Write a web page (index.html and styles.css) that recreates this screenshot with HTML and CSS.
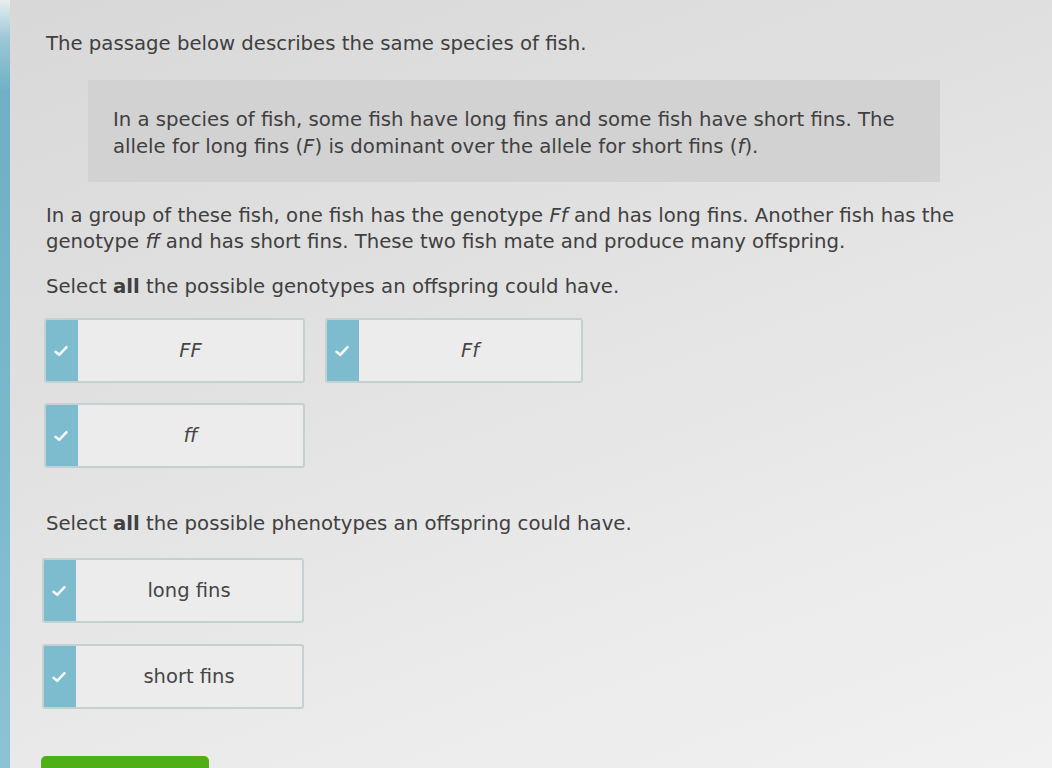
FILE: index.html
```html
<!DOCTYPE html>
<html lang="en">
<head>
<meta charset="utf-8">
<title>Fish fins – genotypes</title>
<link rel="stylesheet" href="styles.css">
</head>
<body>
<div class="screen">
  <div class="edge"></div>
  <main class="question">
    <p class="lead">The passage below describes the same species of fish.</p>

    <div class="passage">
      In a species of fish, some fish have long fins and some fish have short fins. The<br>
      allele for long fins (<i>F</i>) is dominant over the allele for short fins (<i>f</i>).
    </div>

    <p class="body-text">
      In a group of these fish, one fish has the genotype <i>Ff</i> and has long fins. Another fish has the<br>
      genotype <i>ff</i> and has short fins. These two fish mate and produce many offspring.
    </p>

    <p class="prompt">Select <b>all</b> the possible genotypes an offspring could have.</p>

    <div class="choices choices-geno">
      <div class="choice">
        <span class="tick"><svg viewBox="0 0 16 16" width="16" height="16"><path d="M2.5 8.8 L6.2 11.8 L13.5 4.2" fill="none" stroke="#f4f8f9" stroke-width="2.6" stroke-linecap="round" stroke-linejoin="round"/></svg></span>
        <span class="label"><i>FF</i></span>
      </div>
      <div class="choice">
        <span class="tick"><svg viewBox="0 0 16 16" width="16" height="16"><path d="M2.5 8.8 L6.2 11.8 L13.5 4.2" fill="none" stroke="#f4f8f9" stroke-width="2.6" stroke-linecap="round" stroke-linejoin="round"/></svg></span>
        <span class="label"><i>Ff</i></span>
      </div>
      <div class="choice">
        <span class="tick"><svg viewBox="0 0 16 16" width="16" height="16"><path d="M2.5 8.8 L6.2 11.8 L13.5 4.2" fill="none" stroke="#f4f8f9" stroke-width="2.6" stroke-linecap="round" stroke-linejoin="round"/></svg></span>
        <span class="label"><i>ff</i></span>
      </div>
    </div>

    <p class="prompt prompt-pheno">Select <b>all</b> the possible phenotypes an offspring could have.</p>

    <div class="choices choices-pheno">
      <div class="choice">
        <span class="tick"><svg viewBox="0 0 16 16" width="16" height="16"><path d="M2.5 8.8 L6.2 11.8 L13.5 4.2" fill="none" stroke="#f4f8f9" stroke-width="2.6" stroke-linecap="round" stroke-linejoin="round"/></svg></span>
        <span class="label">long fins</span>
      </div>
      <div class="choice">
        <span class="tick"><svg viewBox="0 0 16 16" width="16" height="16"><path d="M2.5 8.8 L6.2 11.8 L13.5 4.2" fill="none" stroke="#f4f8f9" stroke-width="2.6" stroke-linecap="round" stroke-linejoin="round"/></svg></span>
        <span class="label">short fins</span>
      </div>
    </div>

    <button class="submit" type="button" aria-label="Submit"></button>
  </main>
</div>
</body>
</html>
```

FILE: styles.css
```css
html, body {
  margin: 0;
  padding: 0;
  height: 100%;
  overflow: hidden;
}

body {
  font-family: "DejaVu Sans", Verdana, sans-serif;
  color: #404040;
  background: linear-gradient(160deg, #d8d8d8 0%, #e0e0e0 35%, #eaeaea 70%, #f1f1f1 100%);
}

.screen {
  display: flex;
  height: 768px;
}

/* blue rail along the left side of the app */
.edge {
  width: 10px;
  flex: none;
  background: linear-gradient(180deg, #e8eef0 0%, #9cc7d6 5%, #6fb0c6 12%, #7bb8cc 60%, #8cc3d4 100%);
}

.question {
  flex: 1;
  padding: 31px 0 0 36px;
  font-size: 19.7px;
  line-height: 26px;
}

.lead {
  margin: 0;
}

.passage {
  margin: 23px 0 0 42px;
  width: 852px;
  box-sizing: border-box;
  padding: 26px 20px 22px 25px;
  line-height: 27px;
  background: #d2d2d2;
  white-space: nowrap;
}

.body-text {
  margin: 21px 0 0;
  white-space: nowrap;
}

.prompt {
  margin: 19px 0 0;
}

.prompt-pheno {
  margin-top: 43px;
}

.choices {
  display: grid;
  grid-template-columns: 261px 258px;
  column-gap: 20px;
  row-gap: 20px;
  margin-top: 18px;
  margin-left: -2px;
}

.choices-pheno {
  grid-template-columns: 262px;
  margin-top: 21px;
  row-gap: 21px;
  margin-left: -4px;
}

.choice {
  display: flex;
  height: 65px;
  box-sizing: border-box;
  border: 2px solid #c3d1d2;
  border-radius: 3px;
  background: #ececec;
  overflow: hidden;
}

.tick {
  width: 34px;
  flex: none;
  display: flex;
  align-items: center;
  justify-content: center;
  background: #7dbccf;
  margin: -2px 0 -2px -2px;
}

.label {
  flex: 1;
  display: flex;
  align-items: center;
  justify-content: center;
  font-size: 19.5px;
  color: #464646;
}

.submit {
  display: block;
  margin-top: 47px;
  margin-left: -5px;
  width: 168px;
  height: 44px;
  border: none;
  border-radius: 5px;
  background: #4faf16;
}
```
